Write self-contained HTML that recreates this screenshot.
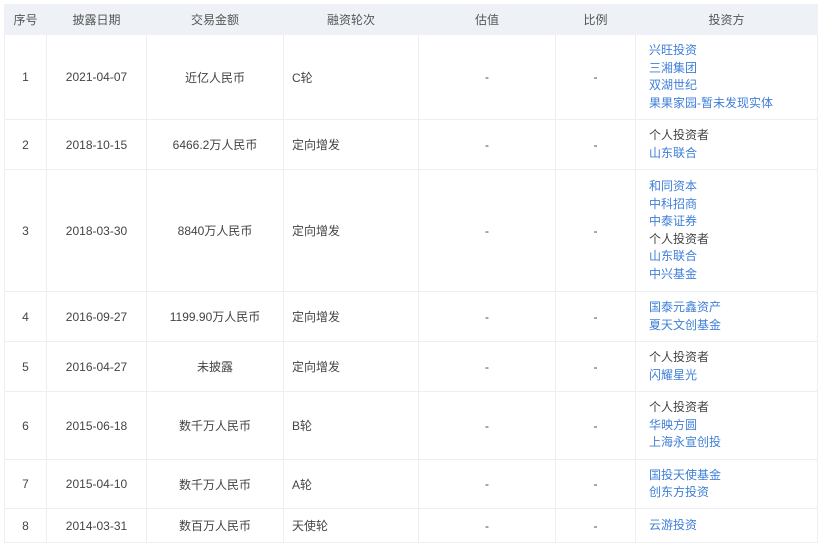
<!DOCTYPE html>
<html><head><meta charset="utf-8"><style>
body{margin:0;width:822px;height:544px;background:#fff;overflow:hidden;font-family:"Liberation Sans","Noto Sans CJK SC",sans-serif;font-size:12px;color:#444}
table{position:absolute;left:4px;top:4px;border-collapse:collapse;table-layout:fixed;width:814px}
td,th{border:1px solid #ebeef3;padding:0;text-align:center;vertical-align:middle}
th{background:#eef1f6;font-weight:normal;height:29px;color:#555;border-color:#eef1f6}
td.l{text-align:left;padding-left:8px}
td.inv{text-align:left;padding-left:13px;line-height:17.5px}
.b{color:#3f7fd8}
</style></head><body>
<table>
<colgroup><col style="width:42px"><col style="width:100px"><col style="width:137px"><col style="width:135px"><col style="width:137px"><col style="width:80px"><col></colgroup>
<tr><th>序号</th><th>披露日期</th><th>交易金额</th><th>融资轮次</th><th>估值</th><th>比例</th><th>投资方</th></tr>
<tr style="height:85px"><td>1</td><td>2021-04-07</td><td>近亿人民币</td><td class="l">C轮</td><td>-</td><td>-</td><td class="inv"><span class="b">兴旺投资<br>三湘集团<br>双湖世纪<br>果果家园-暂未发现实体</span></td></tr>
<tr style="height:50px"><td>2</td><td>2018-10-15</td><td>6466.2万人民币</td><td class="l">定向增发</td><td>-</td><td>-</td><td class="inv">个人投资者<br><span class="b">山东联合</span></td></tr>
<tr style="height:122px"><td>3</td><td>2018-03-30</td><td>8840万人民币</td><td class="l">定向增发</td><td>-</td><td>-</td><td class="inv"><span class="b">和同资本<br>中科招商<br>中泰证券</span><br>个人投资者<br><span class="b">山东联合<br>中兴基金</span></td></tr>
<tr style="height:50px"><td>4</td><td>2016-09-27</td><td>1199.90万人民币</td><td class="l">定向增发</td><td>-</td><td>-</td><td class="inv"><span class="b">国泰元鑫资产<br>夏天文创基金</span></td></tr>
<tr style="height:50px"><td>5</td><td>2016-04-27</td><td>未披露</td><td class="l">定向增发</td><td>-</td><td>-</td><td class="inv">个人投资者<br><span class="b">闪耀星光</span></td></tr>
<tr style="height:68px"><td>6</td><td>2015-06-18</td><td>数千万人民币</td><td class="l">B轮</td><td>-</td><td>-</td><td class="inv">个人投资者<br><span class="b">华映方圆<br>上海永宣创投</span></td></tr>
<tr style="height:49px"><td>7</td><td>2015-04-10</td><td>数千万人民币</td><td class="l">A轮</td><td>-</td><td>-</td><td class="inv"><span class="b">国投天使基金<br>创东方投资</span></td></tr>
<tr style="height:34px"><td>8</td><td>2014-03-31</td><td>数百万人民币</td><td class="l">天使轮</td><td>-</td><td>-</td><td class="inv"><span class="b">云游投资</span></td></tr>
</table>
</body></html>
